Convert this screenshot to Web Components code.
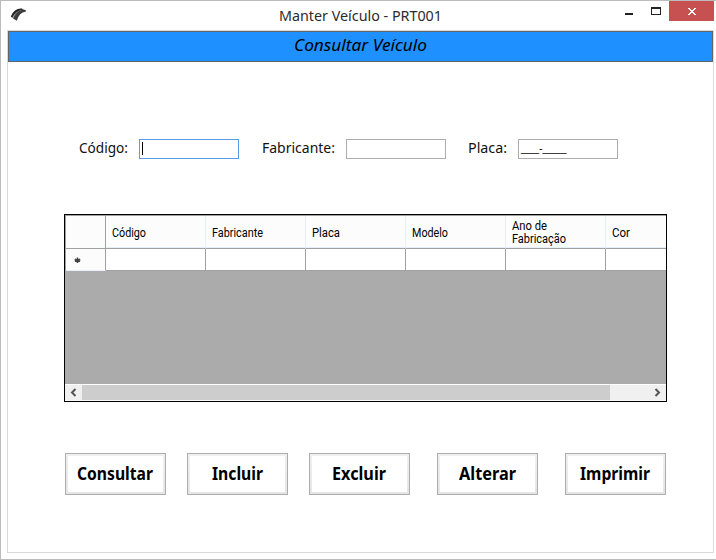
<!DOCTYPE html>
<html lang="pt-BR">
<head>
<meta charset="utf-8">
<title>Manter Veículo - PRT001</title>
<style>
html,body{margin:0;padding:0;background:#fff;overflow:hidden}
</style>
</head>
<body>
<vehicle-window></vehicle-window>
<script>
const define = (name, html, setup) => customElements.define(name, class extends HTMLElement {
  connectedCallback() {
    if (this.shadowRoot) return;
    const t = document.createElement('template');
    t.innerHTML = html;
    this.attachShadow({mode: 'open'}).append(t.content.cloneNode(true));
    if (setup) setup(this, this.shadowRoot);
  }
});

// A single line of text set to a fixed advance width.
define('fit-text', `<style>
:host{display:inline-block;white-space:nowrap;flex:none}
span{display:inline-block;transform-origin:0 50%}
</style><span><slot></slot></span>`, (el, root) => {
  const s = root.querySelector('span');
  const w = +el.getAttribute('w');
  const natural = s.getBoundingClientRect().width;
  el.style.width = w + 'px';
  s.style.transform = `scaleX(${w / natural})`;
});

define('title-bar', `<style>
:host{display:grid;grid-template-columns:278px 1fr 134px;height:29px;font:15px/29px "Noto Sans","Open Sans",sans-serif;color:#2b2b2b}
.logo{padding:6px 0 0 9px;line-height:0}
.tools{display:flex;height:20px}
.tools svg{display:block}
</style>
<div class="logo"><svg width="18" height="16" viewBox="0 0 18 16"><path d="M1 10Q4 1 12 1.5L16 3.3 15.5 4.5Q9.500 5 6.700 14L3 11.500Z" fill="#aaa"/><path d="M.8 9.500Q4 1.500 11.500 1.500L13 2.500Q5.500 4 2.500 10.500Z" fill="#262626"/><path d="M3.200 11.500Q6 4 13 2.500L16 3.600 15.500 4.700Q9 5.500 6.800 13.500Z" fill="#3d3d3d"/></svg></div>
<fit-text w="163"><slot></slot></fit-text>
<div class="tools"><svg width="134" height="20" shape-rendering="crispEdges"><path d="M89 0h45v20H89z" fill="#c75050"/><path d="M45 12h8v2h-8z" fill="#222"/><path d="M71 6h10v8H71zM72 8v5h8V8z" fill="#222" fill-rule="evenodd"/><path d="M108 7h2v1h1v1h2V8h1V7h2v1h-1v1h-1v1h-1v1h1v1h1v1h1v1h-2v-1h-1v-1h-2v1h-1v1h-2v-1h1v-1h1v-1h1v-1h-1V9h-1V8h-1z" fill="#fff"/></svg></div>`);

define('form-banner', `<style>
:host{display:flex;justify-content:center;box-sizing:border-box;height:31px;border:1px solid #646464;background:#1e90ff;font:italic 17px/26px "Noto Sans",sans-serif;color:#000}
</style><fit-text w="133"><slot></slot></fit-text>`);

define('labeled-field', `<style>
:host{display:flex;height:20px;font:14px/18px "Noto Sans","Open Sans",sans-serif;color:#111}
.box{box-sizing:border-box;width:100px;height:20px;margin-left:auto;border:1px solid #ababb0;background:#fff;padding-left:2px;font:11px/16px "Liberation Sans",sans-serif;color:#000}
:host([focused]) .box{border-color:#569de5}
:host([focused]) .box::before{content:"";display:block;width:1px;height:13px;margin:2px 0 0 0;background:#000}
</style><fit-text><slot></slot></fit-text><div class="box"><slot name="value"></slot></div>`, (el, root) => {
  const f = root.querySelector('fit-text');
  const fresh = document.createElement('fit-text');
  fresh.setAttribute('w', el.getAttribute('label-width'));
  fresh.append(f.firstChild);
  f.replaceWith(fresh);
});

define('grid-scrollbar', `<style>
:host{display:grid;grid-template-columns:17px 528px 1fr;height:15px;border-top:1px solid #fff;border-bottom:1px solid #fafafa;background:#f0f0f0}
.thumb{background:#cdcdcd}
.end{display:flex;justify-content:flex-end}
svg{display:block}
</style><svg width="17" height="15"><path d="M10.500 4 7 7.500 10.500 11" fill="none" stroke="#555" stroke-width="2"/></svg><div class="thumb"></div><div class="end"><svg width="17" height="15"><path d="M6.500 4 10 7.500 6.500 11" fill="none" stroke="#555" stroke-width="2"/></svg></div>`);

define('data-grid', `<style>
:host{display:flex;flex-direction:column;box-sizing:border-box;width:603px;height:188px;border:1px solid #000;background:#ababab;font:12px/13px Roboto,sans-serif;color:#000}
.grid{display:grid;grid-template-columns:40px repeat(5,100px) 60px;grid-template-rows:34px 22px;margin-left:1px;background:#a0a0a0;box-shadow:-1px 0 #a0a0a0}
.head,.cell,.corner,.rowhead{box-sizing:border-box;border-right:1px solid #a0a0a0;border-bottom:1px solid #a0a0a0;background:#fff}
.head,.corner{margin-top:1px;background:#fcfcfc}
.head{display:flex;flex-direction:column;justify-content:center;padding:2px 0 0 6px;border-right-color:#e5f0fb;box-shadow:inset 0 -1px #e5f0fb}
.rowhead{background:#fcfcfc;border-bottom-color:#e5f0fb;padding-left:8px;line-height:0}
.head.last,.cell.last{border-right:0}
.space{flex:1}
</style>
<div class="grid">
<div class="corner"></div>
<div class="head"><fit-text w="34">Código</fit-text></div>
<div class="head"><fit-text w="51">Fabricante</fit-text></div>
<div class="head"><fit-text w="28">Placa</fit-text></div>
<div class="head"><fit-text w="36">Modelo</fit-text></div>
<div class="head"><fit-text w="35">Ano de</fit-text><fit-text w="54">Fabricação</fit-text></div>
<div class="head last"><fit-text w="18">Cor</fit-text></div>
<div class="rowhead"><svg width="7" height="21" viewBox="0 0 7 21"><path d="M3.500 8.500v5.500M.8 10.200l5.400 2M6.200 10.200l-5.400 2" stroke="#444" stroke-width="1.600"/></svg></div>
<div class="cell"></div><div class="cell"></div><div class="cell"></div><div class="cell"></div><div class="cell"></div><div class="cell last"></div>
</div>
<div class="space"></div>
<grid-scrollbar></grid-scrollbar>`);

define('action-button', `<style>
:host{display:block;width:101px;height:42px;box-sizing:border-box;border:1px solid #adadad;background:linear-gradient(#f0f0f0,#e5e5e5);padding:2px}
div{display:flex;justify-content:center;height:36px;box-sizing:border-box;padding-right:1px;background:#fff;font:bold 17px/35px "Noto Sans",sans-serif;color:#000}
</style><div></div>`, (el, root) => {
  const f = document.createElement('fit-text');
  f.setAttribute('w', el.getAttribute('text-width'));
  f.append(document.createElement('slot'));
  root.querySelector('div').append(f);
});

define('vehicle-window', `<style>
:host{display:block;box-sizing:border-box;width:716px;height:560px;border:solid #bcbcbc;border-width:1px 0 1px 1px;background:#fff}
title-bar{width:713px}
.client{box-sizing:border-box;width:707px;height:523px;margin-left:6px;border:1px solid #d9d9d9}
.fields{display:flex;margin:77px 0 0 71px}
labeled-field:nth-child(1){width:160px}
labeled-field:nth-child(2){width:184px;margin-left:23px}
labeled-field:nth-child(3){width:150px;margin-left:22px}
data-grid{margin:55px 0 0 56px}
.actions{display:grid;grid-template-columns:122px 122px 128px 128px 101px;margin:51px 0 0 57px}
</style>
<title-bar>Manter Veículo - PRT001</title-bar>
<div class="client">
<form-banner>Consultar Veículo</form-banner>
<div class="fields">
<labeled-field label-width="49" focused>Código:</labeled-field>
<labeled-field label-width="73">Fabricante:</labeled-field>
<labeled-field label-width="39">Placa:<fit-text slot="value" w="45.500">___-____</fit-text></labeled-field>
</div>
<data-grid></data-grid>
<div class="actions">
<action-button text-width="76">Consultar</action-button>
<action-button text-width="51">Incluir</action-button>
<action-button text-width="54">Excluir</action-button>
<action-button text-width="57">Alterar</action-button>
<action-button text-width="70">Imprimir</action-button>
</div>
</div>`);
</script>
</body>
</html>
